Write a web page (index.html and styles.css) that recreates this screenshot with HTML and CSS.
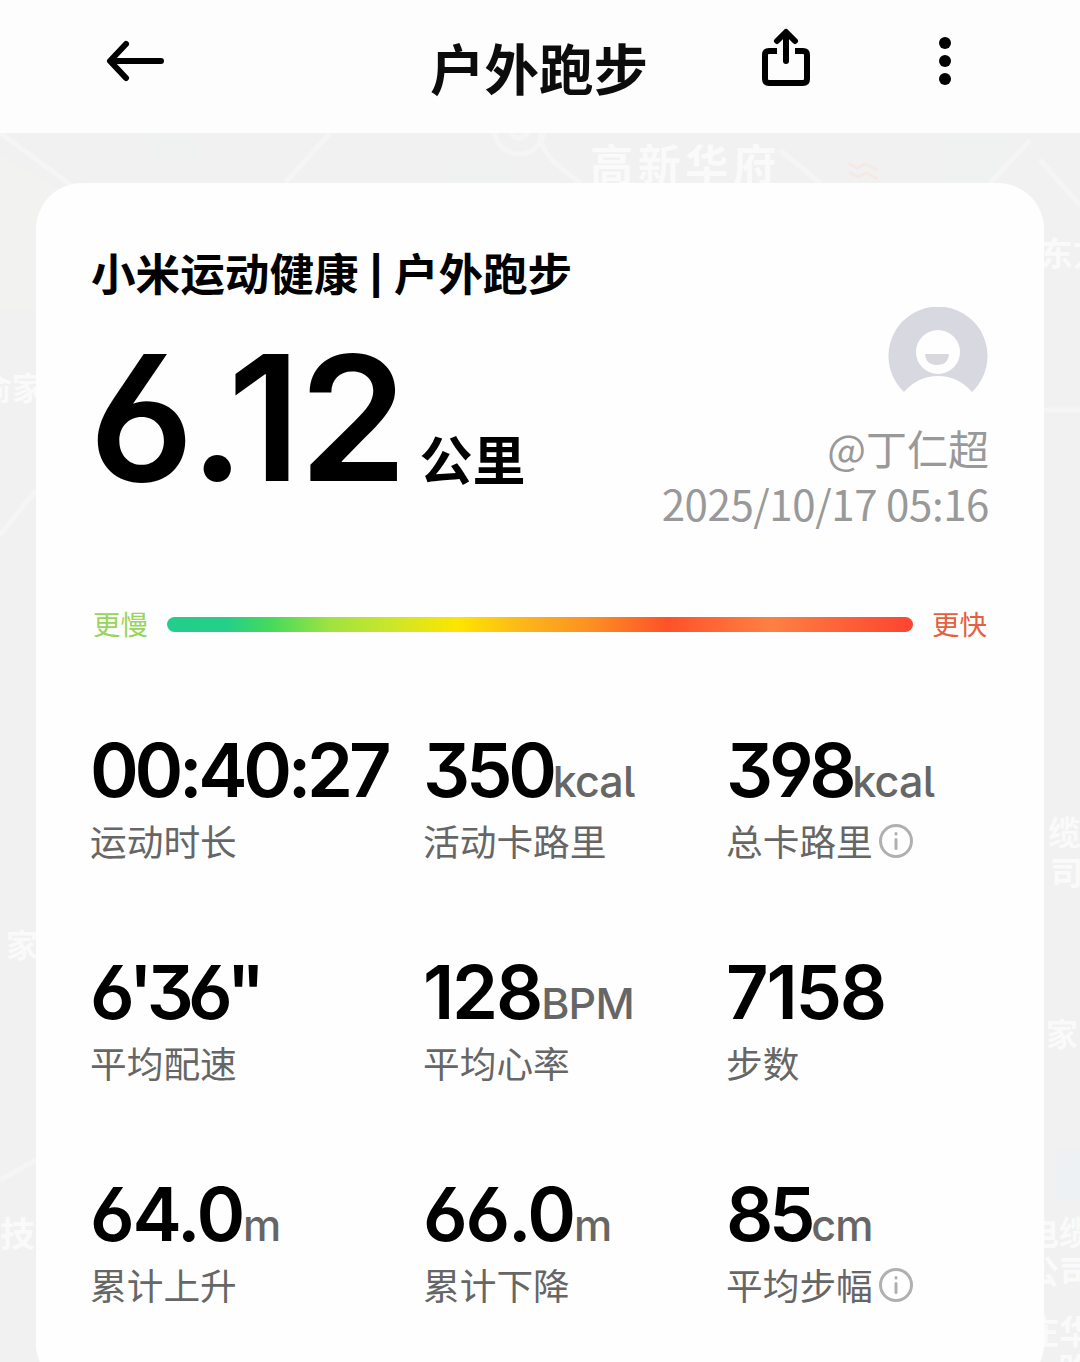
FILE: index.html
```html
<!DOCTYPE html>
<html lang="zh-CN">

<head>
    <meta charset="UTF-8">
    <meta name="viewport" content="width=device-width, initial-scale=1.0">
    <title>户外跑步</title>
    <link rel="stylesheet" href="styles.css">
</head>

<body>
    <header class="topbar">
        <svg class="icon-back" width="60" height="44" viewBox="0 0 60 44">
            <path d="M20 5L4 22l16 17M5 22h50" />
        </svg>
        <h1>户外跑步</h1>
        <svg class="icon-share" width="52" height="60" viewBox="0 0 52 60">
            <path d="M17 23H9q-4 0-4 4v24q0 4 4 4h34q4 0 4-4V27q0-4-4-4h-8" stroke-linecap="butt" />
            <path d="M26 33V5M17 13l9-9 9 9" />
        </svg>
        <svg class="icon-more" width="14" height="52" viewBox="0 0 14 52">
            <circle cx="7" cy="8" r="6" />
            <circle cx="7" cy="26" r="6" />
            <circle cx="7" cy="44" r="6" />
        </svg>
    </header>

    <main class="page">
        <!-- mappa sbiadita dietro la scheda -->
        <svg class="map" width="1080" height="1229" viewBox="0 133 1080 1229">
            <g class="area">
                <path d="M0 155l60 35v120H0z" fill="#f2f2f0" />
                <path d="M150 133h50v26h-50zM450 160h60v25h-60zM940 133h80l-30 50h-50z" fill="#eff2f1" />
                <path d="M1056 1150h24v50h-24z" fill="#edf1f4" />
            </g>
            <g class="road">
                <path d="M0 133l75 55M330 133l-45 50M541 133q-5 20 40 50M1030 140l-40 43M0 535l36-45M1044 410h36M0 1180l36-20M780 150l40 33M1040 160l40 45" />
                <circle cx="519" cy="129" r="25" />
                <circle cx="519" cy="129" r="9" />
            </g>
            <path d="M848 163l9 5 8-4 12 6M849 172l9 5 8-4 12 6" stroke="#f5e9e4" stroke-width="3" fill="none" />
            <g class="place">
                <text x="590" y="181" font-size="43" textLength="186">高新华府</text>
                <text x="1040" y="266" font-size="33">东方</text>
                <text x="-20" y="400" font-size="32">俞家</text>
                <text x="6" y="957" font-size="32">家</text>
                <text x="0" y="1247" font-size="35">技</text>
                <text x="1048" y="845" font-size="33">缆</text>
                <text x="1050" y="885" font-size="33">司</text>
                <text x="1046" y="1046" font-size="32">家</text>
                <text x="1026" y="1245" font-size="33">电缆</text>
                <text x="1026" y="1284" font-size="33">公司</text>
                <text x="1026" y="1344" font-size="33">庄华</text>
                <text x="1058" y="1382" font-size="33">路</text>
            </g>
        </svg>

        <section class="card">
            <h2>小米运动健康<span class="sep">|</span>户外跑步</h2>

            <div class="summary">
                <div class="distance">
                    <span class="distance-num">6.<span class="tail">12</span></span>
                    <span class="distance-unit">公里</span>
                </div>
                <div class="user">
                    <svg class="avatar" width="100" height="100" viewBox="0 0 100 100">
                        <path d="M16 85A49.500 49.500 0 1 1 84 85Q70 69 50 69T16 85z" fill="#d8d8e1" />
                        <circle cx="50" cy="45" r="22" fill="#fefefe" />
                        <path d="M37 47h24q-1 11-12 11T37 47z" fill="#d8d8dd" />
                    </svg>
                    <p class="user-name">@丁仁超</p>
                    <p class="user-date">2025/10/17 05:16</p>
                </div>
            </div>

            <div class="pace">
                <span class="slow">更慢</span>
                <div class="pace-bar"></div>
                <span class="fast">更快</span>
            </div>

            <div class="stats">
                <div class="stat">
                    <p class="value">00:40:27</p>
                    <p class="label">运动时长</p>
                </div>
                <div class="stat">
                    <p class="value">350<span class="unit">kcal</span></p>
                    <p class="label">活动卡路里</p>
                </div>
                <div class="stat">
                    <p class="value">398<span class="unit">kcal</span></p>
                    <p class="label">总卡路里
                        <svg class="info" width="36" height="36" viewBox="0 0 36 36">
                            <circle cx="18" cy="18" r="15.500" />
                            <path d="M18 16.500v9M18 10.500v.4" />
                        </svg>
                    </p>
                </div>
                <div class="stat">
                    <p class="value pace-value">6'36"</p>
                    <p class="label">平均配速</p>
                </div>
                <div class="stat">
                    <p class="value wide">128<span class="unit">BPM</span></p>
                    <p class="label">平均心率</p>
                </div>
                <div class="stat">
                    <p class="value wide">7158</p>
                    <p class="label">步数</p>
                </div>
                <div class="stat">
                    <p class="value wide">64.0<span class="unit">m</span></p>
                    <p class="label">累计上升</p>
                </div>
                <div class="stat">
                    <p class="value wide">66.0<span class="unit">m</span></p>
                    <p class="label">累计下降</p>
                </div>
                <div class="stat">
                    <p class="value">85<span class="unit">cm</span></p>
                    <p class="label">平均步幅
                        <svg class="info" width="36" height="36" viewBox="0 0 36 36">
                            <circle cx="18" cy="18" r="15.500" />
                            <path d="M18 16.500v9M18 10.500v.4" />
                        </svg>
                    </p>
                </div>
            </div>
        </section>
    </main>
</body>

</html>
```
FILE: styles.css
```css
* {
    box-sizing: border-box;
    margin: 0;
    padding: 0;
}

body {
    height: 1362px;
    overflow: hidden;
    background: #f1f1f1;
    color: #000;
    font-family: "Noto Sans CJK SC", sans-serif;
}

.topbar {
    display: flex;
    align-items: flex-start;
    height: 133px;
    background: #fdfdfd;
}

.topbar svg {
    fill: none;
    stroke: #000;
    stroke-width: 6;
    stroke-linecap: round;
    stroke-linejoin: round;
}

.topbar .icon-back {
    margin: 39px 0 0 106px;
}

.topbar h1 {
    margin: 27px 0 0 264px;
    width: 220px;
    font-size: 54.5px;
    line-height: 80px;
    font-weight: 700;
    white-space: nowrap;
    color: #0c0c0c;
}

.topbar .icon-share {
    margin: 28px 0 0 110px;
}

.topbar .icon-more {
    margin: 35px 0 0 126px;
    fill: #000;
    stroke: none;
}

.page {
    position: relative;
    height: 1229px;
    padding: 50px 36px 0;
    overflow: hidden;
}

.map {
    position: absolute;
    top: 0;
    left: 0;
}

.road {
    fill: none;
    stroke: #f5f5f5;
    stroke-width: 5;
}

.place {
    fill: #fafafa;
    font-weight: 700;
}

.card {
    position: relative;
    height: 1207px;
    padding: 59px 55px 0;
    border-radius: 46px;
    background: #fefefe;
}

.card h2 {
    display: flex;
    height: 63px;
    font-size: 44.6px;
    line-height: 60px;
    font-weight: 700;
    white-space: nowrap;
}

.sep {
    margin: 0 12px;
    font-size: 38px;
    line-height: 56px;
    -webkit-text-stroke: 2px #000;
}

.summary {
    display: flex;
    justify-content: space-between;
    height: 289px;
}

.distance {
    display: flex;
    align-items: baseline;
    height: 226px;
    line-height: 226px;
}

.distance-num {
    margin-left: -2px;
    font-family: Inter, sans-serif;
    font-feature-settings: "cv03", "cv04", "cv09";
    font-size: 174px;
    font-weight: 600;
    letter-spacing: -4.5px;
}

.tail {
    margin-left: -13px;
    letter-spacing: -2px;
}

.distance-unit {
    margin-left: 14px;
    font-size: 53px;
    font-weight: 700;
}

.user {
    display: flex;
    flex-direction: column;
    align-items: flex-end;
    padding-top: 2px;
    color: #999;
}

.avatar {
    margin-right: 1px;
}

.user-name {
    margin-top: 12px;
    font-size: 41px;
    line-height: 56px;
}

.user-date {
    font-size: 42px;
    line-height: 56px;
    letter-spacing: -0.4px;
}

.pace {
    display: flex;
    align-items: center;
    height: 60px;
    padding: 0 2px;
    font-size: 27.5px;
    line-height: 40px;
}

.pace span {
    padding-bottom: 2px;
}

.pace-bar {
    flex: 1;
    height: 15px;
    margin: 0 19px;
    border-radius: 8px;
    background: linear-gradient(90deg, #23cd8b 0%, #26cf88 8%, #46da5c 14%, #a0e340 22%, #cbe62a 30%, #fde500 39%, #fcb51b 48%, #fb8f22 57%, #fe5229 67%, #fe8043 81%, #fd6038 91%, #fc4530 100%);
}

.slow {
    color: #99d45c;
}

.fast {
    color: #e5603f;
}

.stats {
    display: grid;
    grid-template-columns: 333px 303px 1fr;
    grid-auto-rows: 222px;
    margin-top: 72px;
}

.value {
    height: 89px;
    margin-left: -1px;
    font-family: Inter, sans-serif;
    font-feature-settings: "cv03", "cv04", "cv09", "cv05";
    font-size: 74px;
    line-height: 89px;
    font-weight: 600;
    letter-spacing: -4.3px;
    white-space: nowrap;
}

.value.wide {
    letter-spacing: -2.2px;
}

.value.pace-value {
    letter-spacing: -6px;
}

.unit {
    font-size: 43px;
    line-height: 0;
    font-weight: 500;
    letter-spacing: -0.8px;
    color: #666;
}

.label {
    display: flex;
    align-items: center;
    gap: 5px;
    margin-left: -1px;
    font-size: 36.7px;
    line-height: 50px;
    color: #666;
}

.info {
    margin-top: 2px;
    fill: none;
    stroke: #b0b0b0;
    stroke-width: 3;
    stroke-linecap: round;
}
```
